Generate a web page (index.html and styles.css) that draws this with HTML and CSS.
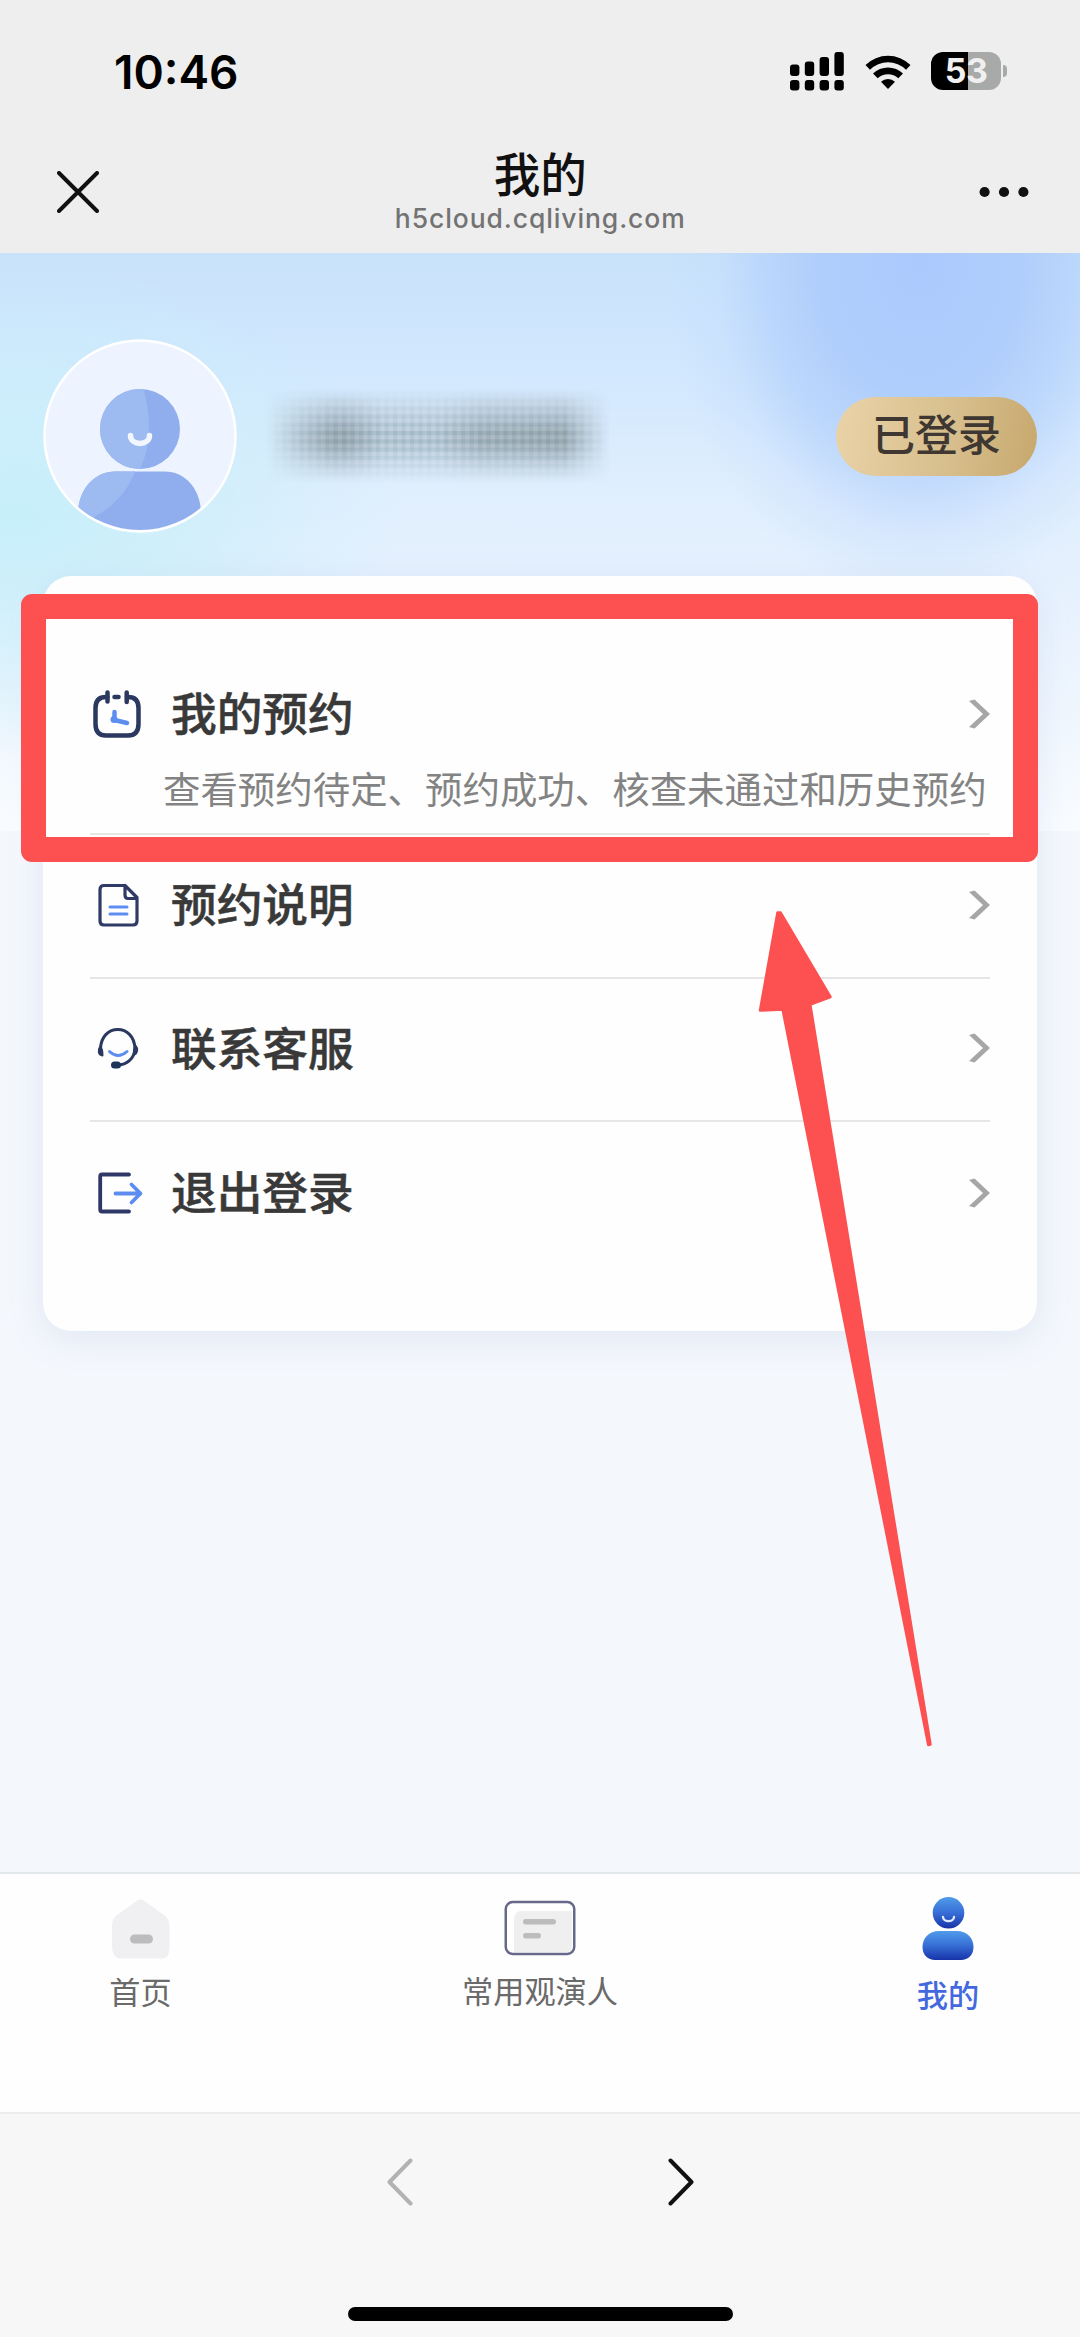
FILE: index.html
```html
<!DOCTYPE html>
<html lang="zh-CN">
<head>
<meta charset="utf-8">
<title>我的</title>
<link rel="stylesheet" href="styles.css">
</head>
<body>
<div class="screen">
  <header class="top">
    <div class="status">
      <span class="time">10:46</span>
      <div class="status-icons">
        <svg class="signal" width="54" height="39" viewBox="0 0 54 39">
          <rect x="0" y="12.5" width="9.4" height="11.5" rx="3"/><rect x="14.8" y="9.5" width="9.4" height="14.5" rx="3"/><rect x="29.6" y="5" width="9.4" height="19" rx="3"/><rect x="44.4" y="0" width="9.4" height="24" rx="3"/>
          <rect x="0" y="28" width="9.4" height="10.5" rx="3"/><rect x="14.8" y="28" width="9.4" height="10.5" rx="3"/><rect x="29.6" y="28" width="9.4" height="10.5" rx="3"/><rect x="44.4" y="28" width="9.4" height="10.5" rx="3"/>
        </svg>
        <svg class="wifi" width="46" height="35" viewBox="0 0 46 35">
          <path d="M0.5 11 A32 32 0 0 1 45.5 11 L41 15.8 A25.5 25.5 0 0 0 5 15.8 Z"/>
          <path d="M8 19.500 A21.5 21.5 0 0 1 38 19.500 L33.3 24.3 A15 15 0 0 0 12.7 24.3 Z"/>
          <path d="M16 27.7 A10.5 10.5 0 0 1 30 27.7 L23 35 Z"/>
        </svg>
        <div class="battery"><span class="level">53</span><i class="nub"></i></div>
      </div>
    </div>
    <div class="nav">
      <svg class="close" width="42" height="42" viewBox="0 0 42 42"><path d="M2 2 40 40M40 2 2 40" stroke="#111" stroke-width="4" stroke-linecap="round"/></svg>
      <div class="heading">
        <h1 class="title">我的</h1>
        <div class="url">h5cloud.cqliving.com</div>
      </div>
      <svg class="more" width="50" height="12" viewBox="0 0 50 12"><circle cx="5.6" cy="6" r="5.1" fill="#111"/><circle cx="25" cy="6" r="5.1" fill="#111"/><circle cx="44.4" cy="6" r="5.1" fill="#111"/></svg>
    </div>
  </header>

  <main class="page">
    <section class="profile">
      <svg class="avatar" width="194" height="194" viewBox="0 0 194 194">
        <defs>
          <clipPath id="ring"><circle cx="97" cy="97" r="94"/></clipPath>
          <clipPath id="head"><circle cx="97" cy="90" r="40"/></clipPath>
          <clipPath id="body"><path d="M35 194V175C35 150 52 132.500 72 132.500H122C142 132.500 158 150 158 175V194Z"/></clipPath>
        </defs>
        <circle cx="97" cy="97" r="95.500" fill="#edf4ff" stroke="#fff" stroke-width="2.500"/>
        <g clip-path="url(#head)"><rect x="50" y="45" width="90" height="90" fill="#90aeee"/><path d="M50 45H98Q106 62 106 90Q106 112 96 132H50Z" fill="#9dbaf1"/></g>
        <g clip-path="url(#ring)"><g clip-path="url(#body)"><rect x="30" y="130" width="134" height="64" fill="#90aeee"/><path d="M30 130H93Q82 162 48 180L30 190Z" fill="#9dbaf1"/></g></g>
        <path d="M87.500 96.500C87.500 107 106.500 107 106.500 96.500" fill="none" stroke="#f2f7ff" stroke-width="5.500" stroke-linecap="round"/>
      </svg>
      <div class="masked-name"></div>
      <span class="badge">已登录</span>
    </section>

    <section class="card">
      <a class="row row-first">
        <svg class="icon" width="48" height="48" viewBox="0 0 48 48" fill="none" stroke-linecap="round" stroke-linejoin="round">
          <path d="M14.500 7H13Q2.500 7 2.500 18V34Q2.500 45.500 13 45.500H35Q45.500 45.500 45.500 34V18Q45.500 7 35 7H34M21.500 7H25.500" stroke="#2b3860" stroke-width="4.500"/>
          <path d="M14.500 2.500V11.500M33.700 2.500V12" stroke="#2b3860" stroke-width="4.500"/>
          <path d="M21.500 22V30L34 33" stroke="#5e8df2" stroke-width="4.500"/><circle cx="21" cy="29.500" r="3.500" fill="#5e8df2"/>
        </svg>
        <span class="label">我的预约</span>
        <svg class="chev" width="21" height="30" viewBox="0 0 21 30"><path d="M0 2 5.500 .5 21 15 5.500 29.500 0 28 14 15Z" fill="#a6a6a6"/></svg>
        <span class="desc">查看预约待定、预约成功、核查未通过和历史预约</span>
      </a>
      <a class="row">
        <svg class="icon" width="48" height="48" viewBox="0 0 48 48" fill="none" stroke-linecap="round" stroke-linejoin="round">
          <path d="M32 4.500H11Q7 4.500 7 8.500V40Q7 44 11 44H40Q44 44 44 40V16.500L32 4.500V14Q32 17.500 35 17.500H44" stroke="#2f3a66" stroke-width="3.200"/>
          <path d="M17 26H34M17 33H34" stroke="#5e8df2" stroke-width="3"/>
        </svg>
        <span class="label">预约说明</span>
        <svg class="chev" width="21" height="30" viewBox="0 0 21 30"><path d="M0 2 5.500 .5 21 15 5.500 29.500 0 28 14 15Z" fill="#a6a6a6"/></svg>
      </a>
      <a class="row">
        <svg class="icon" width="48" height="48" viewBox="0 0 48 48" fill="none" stroke-linecap="round" stroke-linejoin="round">
          <path d="M7.500 25C8 -1 41.500 -1 42 25C41 35 34 40.500 24 41.500" stroke="#2b3860" stroke-width="3"/>
          <path d="M7.200 22.500C4.500 26.500 5.500 31 9.500 31.500C9.500 28 9 24.500 7.200 22.500ZM42.300 21.500C45.500 25 44.500 29 41 31C40.500 28 41 24.500 42.300 21.500Z" fill="#2b3860" stroke="#2b3860" stroke-width="2"/>
          <path d="M21.500 41H24.500" stroke="#1d3557" stroke-width="7"/>
          <path d="M16.500 27.500Q25 35.500 34 27.500" stroke="#5e8df2" stroke-width="3"/>
        </svg>
        <span class="label">联系客服</span>
        <svg class="chev" width="21" height="30" viewBox="0 0 21 30"><path d="M0 2 5.500 .5 21 15 5.500 29.500 0 28 14 15Z" fill="#a6a6a6"/></svg>
      </a>
      <a class="row">
        <svg class="icon icon-exit" width="52" height="48" viewBox="0 0 52 48" fill="none" stroke-linecap="round" stroke-linejoin="round">
          <path d="M36 5.500H9Q7.200 5.500 7.200 7.500V40.500Q7.200 42.500 9 42.500H36" stroke="#2f3766" stroke-width="3.800"/>
          <path d="M22.500 24.500H47M38.500 15.500 47.500 24.500 38.500 33.500" stroke="#5e8df2" stroke-width="3.800"/>
        </svg>
        <span class="label">退出登录</span>
        <svg class="chev" width="21" height="30" viewBox="0 0 21 30"><path d="M0 2 5.500 .5 21 15 5.500 29.500 0 28 14 15Z" fill="#a6a6a6"/></svg>
      </a>
    </section>
  </main>

  <nav class="tabs">
    <a class="tab tab-home">
      <svg width="60" height="60" viewBox="0 0 60 60"><path d="M25.500 2Q29.500-1 33.500 2L53 16Q58.500 20 58.500 27V48Q58.500 59.500 51 59.500H9Q1 59 1 47V26Q1 20 6 16Z" fill="#f0f0f2"/><rect x="19" y="35.500" width="23" height="9" rx="4.500" fill="#bcbcbe"/></svg>
      <span class="tab-label">首页</span>
    </a>
    <a class="tab tab-people">
      <svg width="72" height="56" viewBox="0 0 72 56"><rect x="1.750" y="2" width="68.500" height="52" rx="7" fill="#fff" stroke="#66698a" stroke-width="2.500"/><path d="M18 11H68V46Q68 52 62 52H10V20Q10 11 18 11Z" fill="#efefef"/><rect x="19" y="19" width="33" height="5.500" rx="2.750" fill="#bcbcbc"/><rect x="19" y="33" width="18" height="5.500" rx="2.750" fill="#bcbcbc"/></svg>
      <span class="tab-label">常用观演人</span>
    </a>
    <a class="tab tab-active">
      <svg width="52" height="64" viewBox="0 0 52 64">
        <defs><linearGradient id="blue" x1="0" y1="0" x2="0" y2="1"><stop offset="0" stop-color="#4f9cea"/><stop offset=".5" stop-color="#376ed6"/><stop offset="1" stop-color="#1733a8"/></linearGradient></defs>
        <circle cx="26.500" cy="15.800" r="15.800" fill="url(#blue)"/><path d="M21 20C21 25.500 32 25.500 32 20" fill="none" stroke="#dce8ff" stroke-width="2.400" stroke-linecap="round"/>
        <path d="M17 34H35C45 34 51.500 41 51.500 50C51.500 58 46 63 39 63H13C6 63 .5 58 .5 50C.5 41 7 34 17 34Z" fill="url(#blue)"/>
      </svg>
      <span class="tab-label">我的</span>
    </a>
  </nav>

  <footer class="browser-bar">
    <div class="history">
      <svg width="26" height="48" viewBox="0 0 26 48" fill="none" stroke="#b2b2b2" stroke-width="4" stroke-linecap="round" stroke-linejoin="round"><path d="M23.500 2.500 2.500 24 23.500 45.500"/></svg>
      <svg width="26" height="48" viewBox="0 0 26 48" fill="none" stroke="#111" stroke-width="4" stroke-linecap="round" stroke-linejoin="round"><path d="M2.500 2.500 23.500 24 2.500 45.500"/></svg>
    </div>
    <div class="home-indicator"></div>
  </footer>

  <div class="highlight"></div>
  <svg class="arrow" width="180" height="840" viewBox="755 908 180 840"><path d="M777.500 912.500H780.500L830.500 997 810.300 1004.600 930.500 1744.500 928.300 1745 782.600 1009.500 760 1010.500Z" fill="#fd5050" stroke="#fd5050" stroke-width="2.500" stroke-linejoin="round"/></svg>
</div>
</body>
</html>
```

FILE: styles.css
```css
* { box-sizing: border-box; }

body {
  margin: 0;
  background: #f4f7fc;
  font-family: "Noto Sans CJK SC", "Noto Sans", sans-serif;
}

svg { display: block; flex: none; }

.screen {
  position: relative;
  width: 1080px;
  height: 2337px;
  display: flex;
  flex-direction: column;
  overflow: hidden;
}

/* status bar and title bar */
.top { height: 253px; background: #eee; }

.status {
  height: 144px;
  padding: 0 79px 2px 114px;
  display: flex;
  align-items: center;
  justify-content: space-between;
}

.time {
  font: 600 46px/56px Inter, sans-serif;
  padding-top: 2px;
  color: #000;
}

.status-icons { display: flex; align-items: center; }
.wifi { margin-left: 20.500px; }

.battery {
  position: relative;
  width: 70px;
  height: 38px;
  margin-left: 20.500px;
  border-radius: 12px;
  background: linear-gradient(90deg, #000 37px, #a8a9a9 37px);
  display: flex;
  align-items: center;
  justify-content: center;
}

.level { font: 700 34px/38px Inter, sans-serif; color: #f0f0f0; letter-spacing: -.5px; }

.nub {
  position: absolute;
  left: 72px;
  top: 13px;
  width: 4px;
  height: 12px;
  border-radius: 0 4px 4px 0;
  background: #a8a9a9;
}

.nav {
  height: 109px;
  padding: 0 51px 0 56.500px;
  display: flex;
  justify-content: space-between;
}

.close { margin-top: 27px; }
.more { margin-top: 42px; }
.heading { text-align: center; padding-left: 3px; }

.title {
  margin: 0;
  font-size: 46.500px;
  font-weight: 500;
  line-height: 56px;
  color: #111;
}

.url {
  font: 500 26.500px/32px Inter, sans-serif;
  letter-spacing: .9px;
  color: #737373;
  margin-top: 2px;
}

/* page body */
.page {
  height: 1619px;
  padding: 86px 43px 0;
  background:
    radial-gradient(ellipse 255px 340px at 920px 10px, #abc9fc 0%, #b0cefc 40%, #b8d4fccc 62%, #c4dcfd66 80%, #d8e8fe00 100%) no-repeat 0 0 / 100% 578px,
    radial-gradient(ellipse 380px 250px at 20px 260px, #c6effa 0%, #c9effa99 50%, #c9effa00 100%) no-repeat 0 0 / 100% 578px,
    linear-gradient(180deg, #c8e2f9 0, #cde5fd 60px, #d4e9fe 140px, #dfeefd 230px, #e6f1fe 330px, #eff6fe 460px, #f9fcff 578px) no-repeat 0 0 / 100% 578px,
    #f4f7fc;
}

.profile { height: 194px; display: flex; align-items: center; }

.masked-name {
  width: 352px;
  height: 100px;
  margin-left: 25px;
  background:
    repeating-linear-gradient(90deg, #ffffff10 0 3px, #50708012 4px 7px, #ffffff10 8.500px),
    repeating-linear-gradient(180deg, #ffffff14 0 3px, #5070801c 4px 7px, #ffffff14 8.300px),
    linear-gradient(90deg, #a0b0ba 0, #9aaab5 24%, #b6c9d6 34%, #b6c9d6 50%, #a1b2bd 62%, #9babb5 85%, #a4b5bf 100%);
  -webkit-mask-image: linear-gradient(90deg, transparent 1%, #0009 11%, #000 20%, #000 86%, transparent 99%), linear-gradient(180deg, transparent 3%, #0006 20%, #000 45%, #000 58%, #0006 80%, transparent 97%);
  -webkit-mask-composite: source-in;
  mask-composite: intersect;
}

.badge {
  width: 201px;
  height: 79px;
  margin-left: auto;
  padding-bottom: 6px;
  border-radius: 40px;
  background: linear-gradient(100deg, #ead3a8 0%, #d6bd8b 60%, #c7a86d 100%);
  color: #3f3832;
  font-size: 43px;
  font-weight: 500;
  line-height: 71px;
  text-align: center;
}

.card {
  height: 755px;
  width: 994px;
  margin-top: 43px;
  padding: 0 47px;
  border-radius: 28px;
  background: #fefefe;
  box-shadow: 0 8px 32px #a0b0d838;
}

.row {
  height: 143.500px;
  padding-bottom: 2px;
  border-bottom: 2px solid #e6e6e6;
  display: grid;
  grid-template-columns: 81px 1fr 21px;
  align-items: center;
}

.row:last-child { border-bottom: 0; }
.icon { margin-left: 3px; }

.label {
  font-size: 45.700px;
  font-weight: 500;
  line-height: 60px;
  padding-bottom: 5px;
  color: #393939;
  -webkit-text-stroke: .5px #393939;
}

.row-first {
  height: 259px;
  padding-top: 105px;
  grid-template-rows: 65px 1fr;
}

.desc {
  grid-column: 1 / -1;
  align-self: start;
  margin: 17px 0 0 73px;
  font-size: 37.450px;
  line-height: 50px;
  white-space: nowrap;
  color: #838383;
}

/* tab bar */
.tabs {
  height: 240px;
  border-top: 2px solid #e3e8eb;
  background: #fefefe;
  display: grid;
  grid-template-columns: 280px 520px 280px;
}

.tab {
  padding-top: 25px;
  display: flex;
  flex-direction: column;
  align-items: center;
}

.tab-label {
  margin-top: 9px;
  font-size: 31.200px;
  line-height: 46px;
  color: #6a6a6a;
}

.tab-home { padding-left: 1px; }
.tab-people svg { margin-top: 1px; }
.tab-people .tab-label { margin-top: 11px; }
.tab-active { padding: 23px 0 0 16px; }
.tab-active .tab-label { margin-top: 10px; color: #4469df; font-weight: 500; }

/* in-app browser controls */
.browser-bar {
  height: 225px;
  padding-top: 44px;
  border-top: 2px solid #ededed;
  background: #f7f7f7;
}

.history { display: flex; justify-content: center; gap: 255px; }
.home-indicator { width: 385px; height: 14px; margin: 101px auto 0; border-radius: 7px; background: #000; }

/* annotations drawn over the page */
.highlight {
  position: absolute;
  left: 21px;
  top: 594px;
  width: 1017px;
  height: 268px;
  border: 25px solid #fd5050;
  border-radius: 11px;
}

.arrow { position: absolute; left: 755px; top: 908px; }
```
